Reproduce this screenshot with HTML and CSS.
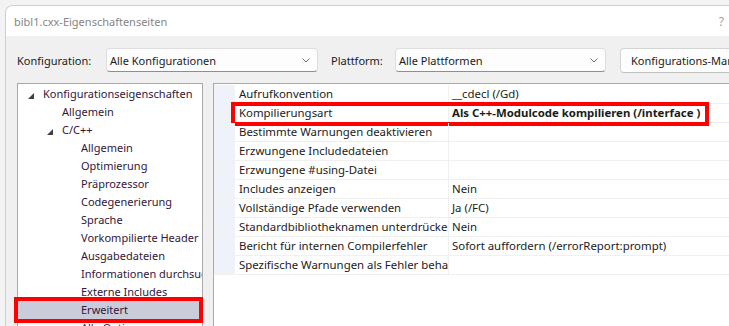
FILE: index.html
```html
<!DOCTYPE html>
<html lang="de">
<head>
<meta charset="utf-8">
<title>bibl1.cxx-Eigenschaftenseiten</title>
<link rel="stylesheet" href="styles.css">
</head>
<body>
<div class="window">
  <div class="titlebar">
    <span class="title">bibl1.cxx-Eigenschaftenseiten</span>
    <span class="help">?</span>
  </div>
  <div class="content">
    <div class="toolbar">
      <span class="label label-config">Konfiguration:</span>
      <div class="combo combo-config">
        <span class="combo-text">Alle Konfigurationen</span>
        <svg class="chevron" width="8" height="5" viewBox="0 0 8 5"><path d="M0.5 0.5 L4 4 L7.5 0.5" fill="none" stroke="#707070" stroke-width="1"/></svg>
      </div>
      <span class="label label-platform">Plattform:</span>
      <div class="combo combo-platform">
        <span class="combo-text">Alle Plattformen</span>
        <svg class="chevron" width="8" height="5" viewBox="0 0 8 5"><path d="M0.5 0.5 L4 4 L7.5 0.5" fill="none" stroke="#707070" stroke-width="1"/></svg>
      </div>
      <div class="button">Konfigurations-Manager...</div>
    </div>
    <div class="panels">
      <div class="tree">
        <div class="node lvl0"><span class="toggle"><svg width="6" height="6" viewBox="0 0 6 6"><polygon points="6,0 6,6 0,6" fill="#404040"/></svg></span><span class="node-text">Konfigurationseigenschaften</span></div>
        <div class="node lvl1"><span class="toggle"></span><span class="node-text">Allgemein</span></div>
        <div class="node lvl1"><span class="toggle"><svg width="6" height="6" viewBox="0 0 6 6"><polygon points="6,0 6,6 0,6" fill="#404040"/></svg></span><span class="node-text">C/C++</span></div>
        <div class="node lvl2"><span class="toggle"></span><span class="node-text">Allgemein</span></div>
        <div class="node lvl2"><span class="toggle"></span><span class="node-text">Optimierung</span></div>
        <div class="node lvl2"><span class="toggle"></span><span class="node-text">Präprozessor</span></div>
        <div class="node lvl2"><span class="toggle"></span><span class="node-text">Codegenerierung</span></div>
        <div class="node lvl2"><span class="toggle"></span><span class="node-text">Sprache</span></div>
        <div class="node lvl2"><span class="toggle"></span><span class="node-text">Vorkompilierte Header</span></div>
        <div class="node lvl2"><span class="toggle"></span><span class="node-text">Ausgabedateien</span></div>
        <div class="node lvl2"><span class="toggle"></span><span class="node-text">Informationen durchsuchen</span></div>
        <div class="node lvl2"><span class="toggle"></span><span class="node-text">Externe Includes</span></div>
        <div class="node lvl2 selected"><span class="toggle"></span><span class="node-text">Erweitert</span></div>
        <div class="node lvl2"><span class="toggle"></span><span class="node-text">Alle Optionen</span></div>
      </div>
      <div class="grid">
        <div class="row"><span class="gutter"></span><span class="name">Aufrufkonvention</span><span class="value">__cdecl (/Gd)</span></div>
        <div class="row marked"><span class="gutter"></span><span class="name">Kompilierungsart</span><span class="value bold">Als C++-Modulcode kompilieren (/interface )</span></div>
        <div class="row"><span class="gutter"></span><span class="name">Bestimmte Warnungen deaktivieren</span><span class="value"></span></div>
        <div class="row"><span class="gutter"></span><span class="name">Erzwungene Includedateien</span><span class="value"></span></div>
        <div class="row"><span class="gutter"></span><span class="name">Erzwungene #using-Datei</span><span class="value"></span></div>
        <div class="row"><span class="gutter"></span><span class="name">Includes anzeigen</span><span class="value">Nein</span></div>
        <div class="row"><span class="gutter"></span><span class="name">Vollständige Pfade verwenden</span><span class="value">Ja (/FC)</span></div>
        <div class="row"><span class="gutter"></span><span class="name">Standardbibliotheknamen unterdrücken</span><span class="value">Nein</span></div>
        <div class="row"><span class="gutter"></span><span class="name">Bericht für internen Compilerfehler</span><span class="value">Sofort auffordern (/errorReport:prompt)</span></div>
        <div class="row"><span class="gutter"></span><span class="name">Spezifische Warnungen als Fehler behandeln</span><span class="value"></span></div>
      </div>
    </div>
  </div>
</div>
</body>
</html>
```
FILE: styles.css
```css
html, body {
  margin: 0;
  padding: 0;
  height: 100%;
  overflow: hidden;
}
body {
  background: #f3f3f3;
  padding: 5px 0 0 5px;
  box-sizing: border-box;
  font-family: "Noto Sans", "Open Sans", sans-serif;
  font-size: 11px;
  color: #1b1b1b;
}
.window {
  height: 330px;
  border: 1px solid #cfcfcf;
  border-right: none;
  border-bottom: none;
  border-top-left-radius: 8px;
  background: #f0f0f0;
  overflow: hidden;
}
.titlebar {
  height: 30px;
  background: #ffffff;
  display: flex;
  align-items: center;
  padding-left: 8px;
  padding-right: 5px;
}
.title {
  color: #858585;
}
.help {
  margin-left: auto;
  color: #a0a0a0;
  font-size: 12px;
}
.content {
  padding: 12px 0 0 11px;
}
.toolbar {
  display: flex;
  align-items: center;
  height: 24px;
}
.label {
  white-space: nowrap;
  flex: none;
}
.label-config { width: 89px; }
.label-platform { width: 64px; margin-left: 13px; }
.combo {
  flex: none;
  box-sizing: border-box;
  height: 24px;
  background: #fdfdfd;
  border: 1px solid #dedede;
  border-bottom-color: #8f8f8f;
  border-radius: 4px;
  display: flex;
  align-items: center;
  padding-left: 3px;
  padding-right: 7px;
}
.combo-config { width: 212px; }
.combo-platform { width: 211px; }
.combo-text {
  flex: 1;
  white-space: nowrap;
}
.chevron {
  display: block;
}
.button {
  flex: none;
  box-sizing: border-box;
  height: 25px;
  margin-left: 14px;
  padding-left: 10px;
  width: 200px;
  background: #fdfdfd;
  border: 1px solid #d4d4d4;
  border-bottom-color: #c2c2c2;
  border-radius: 4px;
  display: flex;
  align-items: center;
  white-space: nowrap;
}
.panels {
  display: flex;
  margin-top: 11px;
  gap: 10px;
}
.tree {
  flex: none;
  box-sizing: border-box;
  width: 186px;
  height: 260px;
  background: #ffffff;
  border: 1px solid #a9a9a9;
  padding-top: 1px;
  color: #32173a;
}
.node {
  position: relative;
  display: flex;
  align-items: center;
  height: 18px;
  line-height: 18px;
}
.node.lvl0 { padding-left: 10px; }
.node.lvl1 { padding-left: 29px; }
.node.lvl2 { padding-left: 48px; }
.toggle {
  width: 15px;
  flex: none;
  display: flex;
  align-items: center;
  padding-top: 3px;
}
.toggle svg { display: block; }
.node-text {
  flex: 1;
  min-width: 0;
  overflow: hidden;
  white-space: nowrap;
}
.node.selected {
  background: #cacdd9;
}
.node.selected::after {
  content: "";
  position: absolute;
  left: -4px;
  top: -4px;
  width: 189px;
  height: 26px;
  border: 4px solid #ff0000;
  box-sizing: border-box;
}
.grid {
  flex: 1;
  height: 260px;
  background: #ffffff;
  border-top: 1px solid #a9a9a9;
  border-left: 1px solid #a9a9a9;
  padding-top: 1px;
  font-size: 11.4px;
}
.row {
  position: relative;
  display: flex;
  height: 19px;
  box-sizing: border-box;
  border-bottom: 1px solid #f0f0f0;
  line-height: 18px;
}
.gutter {
  width: 21px;
  flex: none;
  background: #eff3f9;
}
.name {
  width: 214px;
  flex: none;
  box-sizing: border-box;
  padding-left: 4px;
  overflow: hidden;
  white-space: nowrap;
  border-right: 1px solid #f0f0f0;
}
.value {
  flex: 1;
  padding-left: 3px;
  white-space: nowrap;
}
.bold {
  font-weight: bold;
}
.row.marked::after {
  content: "";
  position: absolute;
  left: 17px;
  top: -2px;
  width: 478px;
  height: 24px;
  border: 4px solid #ff0000;
  box-sizing: border-box;
}
```
